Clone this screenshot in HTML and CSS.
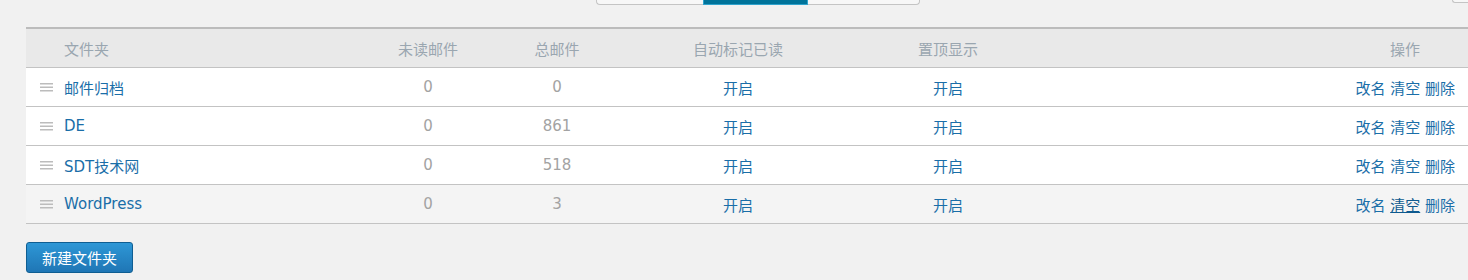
FILE: index.html
```html
<!DOCTYPE html>
<html>
<head>
    <title>文件夹管理</title>
    <link rel="stylesheet" href="styles.css">
</head>
<body>
    <div class="topbar">
        <div class="tabs">
            <span class="tab first"></span>
            <span class="tab active"></span>
            <span class="tab last"></span>
        </div>
        <span class="corner"></span>
    </div>

    <div class="panel">
        <table class="folders">
            <colgroup>
                <col style="width: 38px">
                <col style="width: 304px">
                <col style="width: 120px">
                <col style="width: 138px">
                <col style="width: 224px">
                <col style="width: 196px">
                <col>
                <col style="width: 126px">
            </colgroup>
            <thead>
                <tr>
                    <th></th>
                    <th class="name">文件夹</th>
                    <th>未读邮件</th>
                    <th>总邮件</th>
                    <th>自动标记已读</th>
                    <th>置顶显示</th>
                    <th></th>
                    <th>操作</th>
                </tr>
            </thead>
            <tbody>
                <tr>
                    <td class="handle"><svg width="13" height="9" viewBox="0 0 13 9"><rect y="0" width="13" height="1.5" fill="#bcbcbc"/><rect y="3.5" width="13" height="1.5" fill="#bcbcbc"/><rect y="7" width="13" height="1.5" fill="#bcbcbc"/></svg></td>
                    <td class="name"><a href="#">邮件归档</a></td>
                    <td class="num">0</td>
                    <td class="num">0</td>
                    <td><a href="#">开启</a></td>
                    <td><a href="#">开启</a></td>
                    <td></td>
                    <td class="actions"><a href="#">改名</a> <a href="#">清空</a> <a href="#">删除</a></td>
                </tr>
                <tr>
                    <td class="handle"><svg width="13" height="9" viewBox="0 0 13 9"><rect y="0" width="13" height="1.5" fill="#bcbcbc"/><rect y="3.5" width="13" height="1.5" fill="#bcbcbc"/><rect y="7" width="13" height="1.5" fill="#bcbcbc"/></svg></td>
                    <td class="name"><a href="#">DE</a></td>
                    <td class="num">0</td>
                    <td class="num">861</td>
                    <td><a href="#">开启</a></td>
                    <td><a href="#">开启</a></td>
                    <td></td>
                    <td class="actions"><a href="#">改名</a> <a href="#">清空</a> <a href="#">删除</a></td>
                </tr>
                <tr>
                    <td class="handle"><svg width="13" height="9" viewBox="0 0 13 9"><rect y="0" width="13" height="1.5" fill="#bcbcbc"/><rect y="3.5" width="13" height="1.5" fill="#bcbcbc"/><rect y="7" width="13" height="1.5" fill="#bcbcbc"/></svg></td>
                    <td class="name"><a href="#">SDT技术网</a></td>
                    <td class="num">0</td>
                    <td class="num">518</td>
                    <td><a href="#">开启</a></td>
                    <td><a href="#">开启</a></td>
                    <td></td>
                    <td class="actions"><a href="#">改名</a> <a href="#">清空</a> <a href="#">删除</a></td>
                </tr>
                <tr class="hover">
                    <td class="handle"><svg width="13" height="9" viewBox="0 0 13 9"><rect y="0" width="13" height="1.5" fill="#bcbcbc"/><rect y="3.5" width="13" height="1.5" fill="#bcbcbc"/><rect y="7" width="13" height="1.5" fill="#bcbcbc"/></svg></td>
                    <td class="name"><a href="#">WordPress</a></td>
                    <td class="num">0</td>
                    <td class="num">3</td>
                    <td><a href="#">开启</a></td>
                    <td><a href="#">开启</a></td>
                    <td></td>
                    <td class="actions"><a href="#">改名</a> <a href="#" class="hovered">清空</a> <a href="#">删除</a></td>
                </tr>
            </tbody>
        </table>

        <button class="btn-primary">新建文件夹</button>
    </div>
</body>
</html>
```

FILE: styles.css
```css
body { margin: 0; background: #f1f1f1; font-family: "DejaVu Sans", "Noto Sans CJK SC", sans-serif; font-size: 15px; color: #333; }
a { color: #1a6ea8; text-decoration: none; }
a.hovered { color: #0e5a8f; text-decoration: underline; }

.topbar { display: flex; height: 27px; }
.tabs { display: flex; margin-left: 596px; height: 5px; }
.tab { display: block; box-sizing: border-box; height: 5px; border: 1px solid #c4c4c4; border-top: none; background: #f7f7f7; }
.tab.first { width: 107px; border-radius: 0 0 0 4px; border-right: none; }
.tab.active { width: 105px; background: #00739a; border-color: #2ea2cc; }
.tab.last { width: 112px; border-radius: 0 0 4px 0; border-left: none; }
.corner { display: block; box-sizing: border-box; margin-left: auto; width: 16px; height: 3px; border: 1px solid #c4c4c4; border-top: none; border-right: none; border-radius: 0 0 0 3px; background: #f7f7f7; }

.panel { padding-left: 26px; }
.folders { width: 100%; table-layout: fixed; border-collapse: collapse; border-top: 2px solid #bcbcbc; }
.folders th { height: 38px; padding: 0; background: #e9e9e9; color: #9aa6b0; font-weight: normal; text-align: center; border-bottom: 1px solid #c3c3c3; }
.folders td { height: 38px; padding: 0; background: #fff; text-align: center; border-bottom: 1px solid #c3c3c3; }
.folders tr.hover td { background: #f4f4f4; }
.folders .name { text-align: left; }
.folders .num { color: #a3a3a3; }
.folders .handle { text-align: left; padding-left: 14px; line-height: 0; }
.folders .actions { text-align: right; padding-right: 13px; }

.btn-primary { margin-top: 18px; height: 31px; padding: 0 15px; font-family: inherit; font-size: 15px; color: #fff; border: 1px solid #0f5e92; border-radius: 3px; background: linear-gradient(#2e97d6, #1f76b5); cursor: pointer; }
```
